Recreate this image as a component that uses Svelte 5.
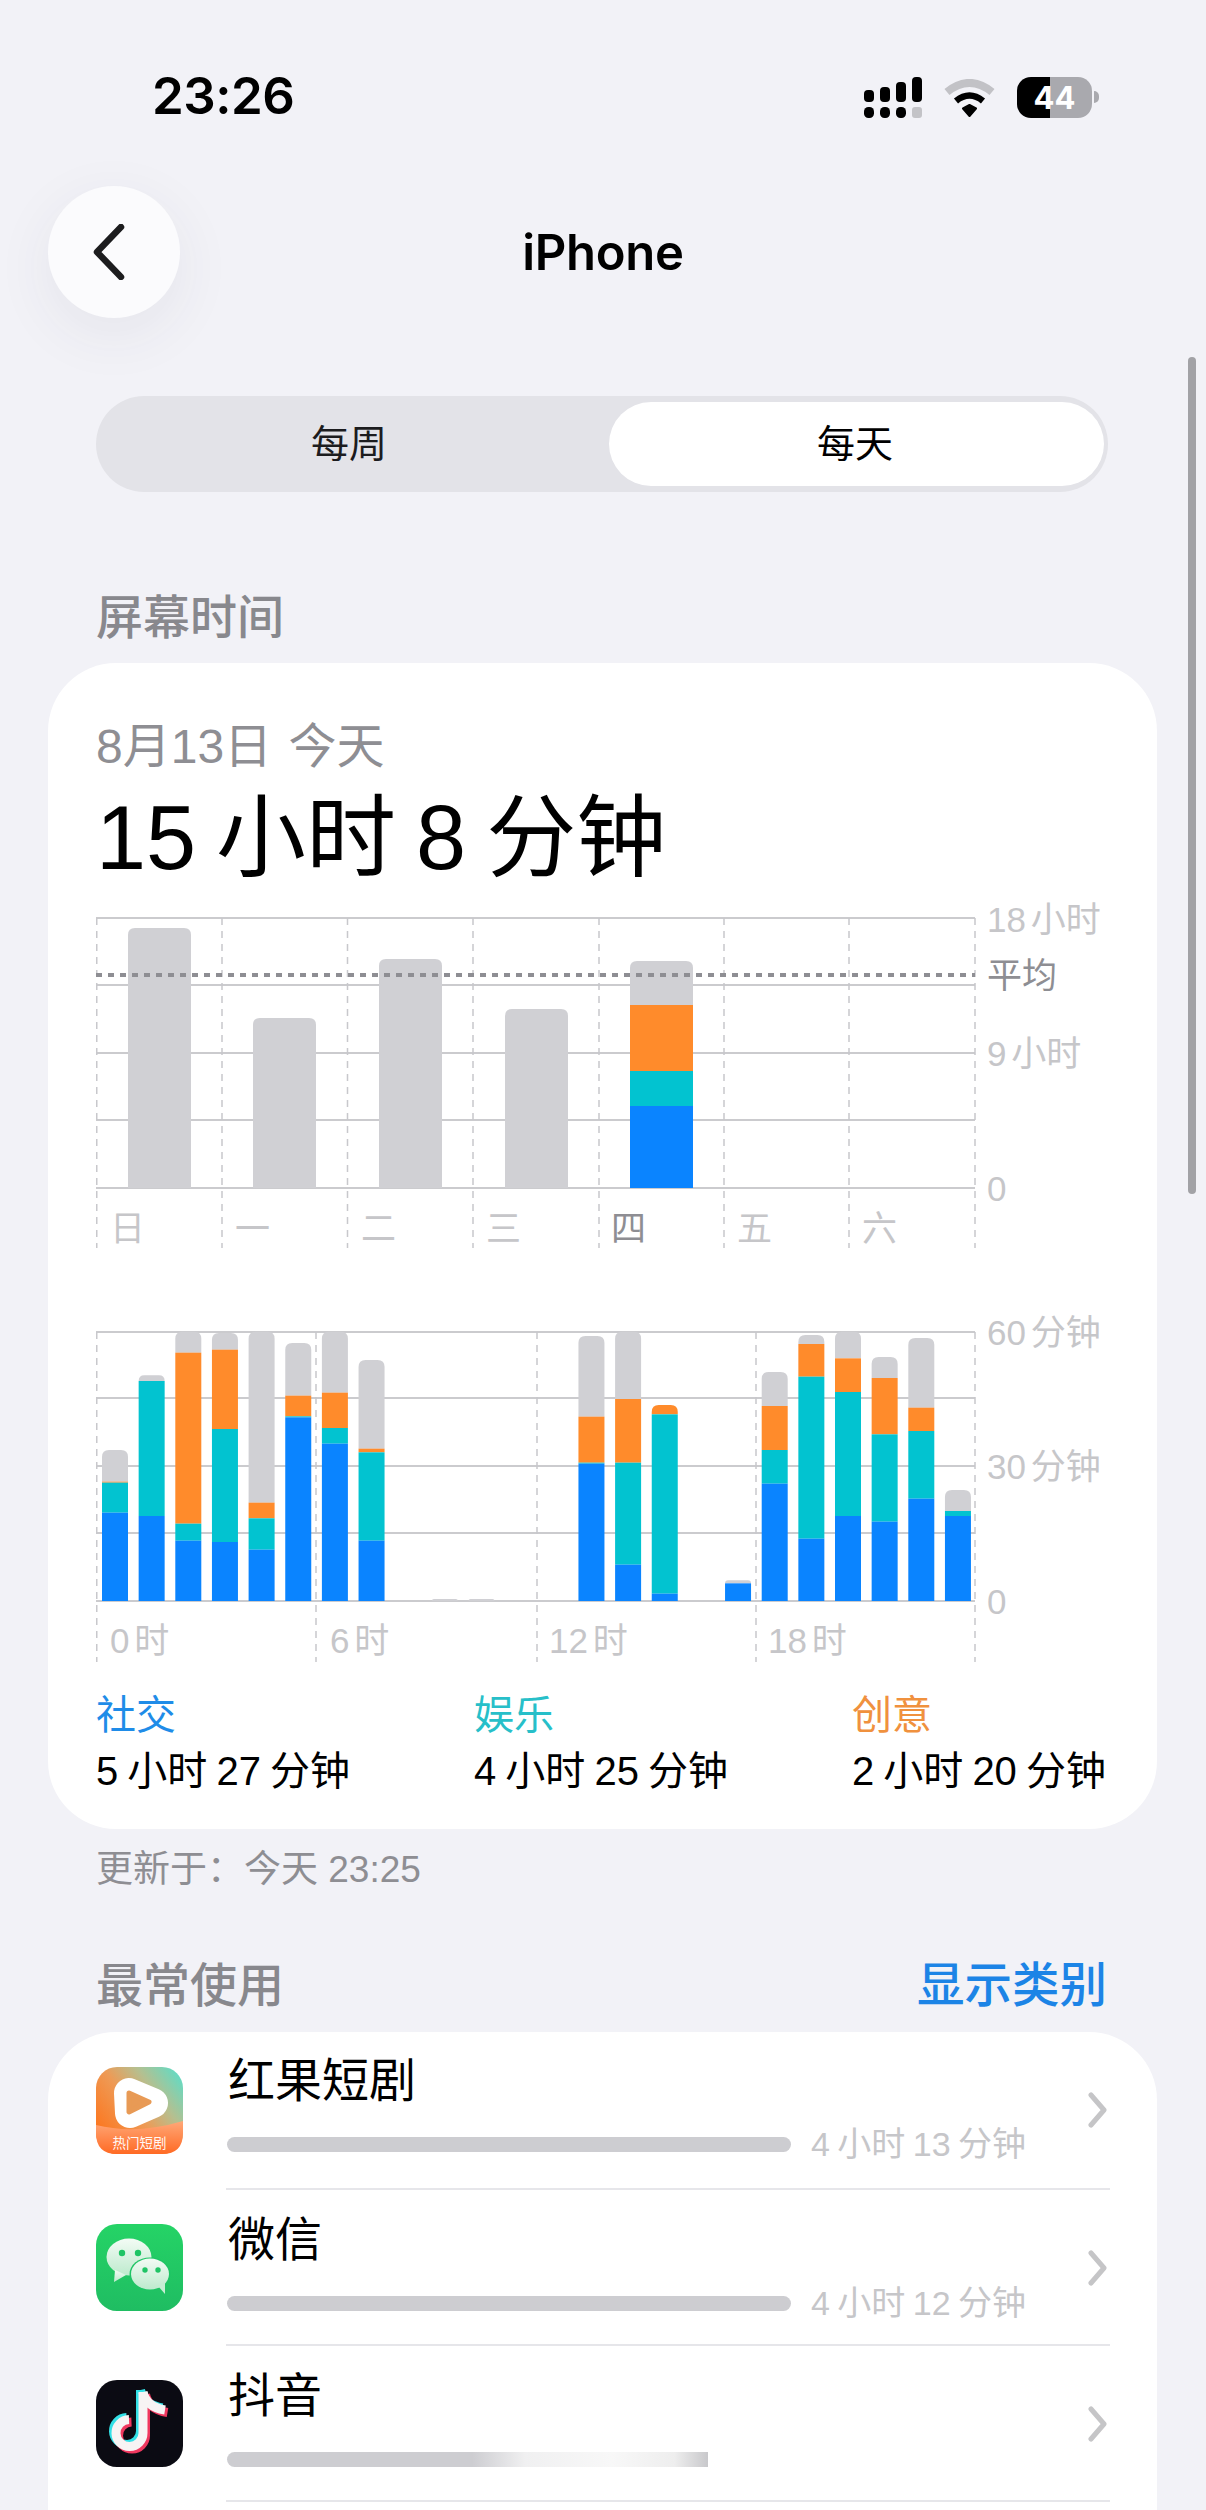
<script>
  const BLUE = '#0a84ff', TEAL = '#02c3d0', ORANGE = '#ff8b2b', GRAY = '#d0d0d4';
  const topPath = (x, y, w, h, r) => {
    const q = Math.min(r, h);
    return `M${x} ${y + h}V${y + q}Q${x} ${y} ${x + q} ${y}H${x + w - q}Q${x + w} ${y} ${x + w} ${y + q}V${y + h}Z`;
  };

  // chart 1 (svg origin 96,900)
  const vDays = [0.75, 126, 251.5, 377, 503, 628, 753, 879];
  const hDays = [18, 85, 153, 220, 288];
  const dayBars = [
    { x: 32, top: 28 }, { x: 157, top: 118 }, { x: 283, top: 59 }, { x: 409, top: 109 }
  ];
  const today = [
    { c: ORANGE, y: 105, h: 66 }, { c: TEAL, y: 171, h: 35 }, { c: BLUE, y: 206, h: 82 }
  ];
  const dayLabels = [
    { t: '日', x: 14 }, { t: '一', x: 139 }, { t: '二', x: 265 }, { t: '三', x: 390 },
    { t: '四', x: 515, on: true }, { t: '五', x: 641 }, { t: '六', x: 766 }
  ];

  // chart 2 (svg origin 96,1310): hour, then the tops of gray/orange/teal/blue read from the reference
  const hours = [
    [0, 450, 545, 548, 638], [1, 226, null, 243, 648], [2, 95, 158, 671, 722], [3, 99, 149, 387, 726],
    [4, 95, 608, 655, 749], [5, 129, 287, 349, 352], [6, 95, 278, 384, 431], [7, 180, 446, 457, 722],
    [9, 897, null, null, null], [10, 897, null, null, null],
    [13, 108, 350, 488, 491], [14, 95, 297, 488, 794], [15, null, 315, 343, 881],
    [17, 841, null, null, 850],
    [18, 216, 318, 450, 551], [19, 105, 132, 230, 716], [20, 95, 175, 276, 648], [21, 171, 234, 403, 665],
    [22, 114, 323, 393, 596], [23, 570, null, 633, 648]
  ];
  const cols = [GRAY, ORANGE, TEAL, BLUE];
  const BASE = 903;
  const toY = (z) => z / 3 - 10;
  const hourBars = hours.map(([i, ...tops]) => {
    const x = 6 + i * 36.65;
    const segs = [];
    tops.forEach((t, k) => {
      if (t === null) return;
      let end = BASE;
      for (let n = k + 1; n < 4; n++) if (tops[n] !== null) { end = tops[n]; break; }
      segs.push({ c: cols[k], y: toY(t), h: (end - t) / 3 });
    });
    return { x, first: segs[0], rest: segs.slice(1) };
  });
  const vHours = [0.75, 220, 441, 660, 879];
  const hHours = [22, 88, 156, 223, 291];
  const hourLabels = [
    { t: '0 时', x: 14 }, { t: '6 时', x: 234 }, { t: '12 时', x: 453 }, { t: '18 时', x: 672 }
  ];

  const legend = [
    { k: '社交', v: '5 小时 27 分钟', c: 'social' },
    { k: '娱乐', v: '4 小时 25 分钟', c: 'fun' },
    { k: '创意', v: '2 小时 20 分钟', c: 'make' }
  ];
</script>

<div class="page">
  <div class="scrollbar"></div>

  <header class="status">
    <span class="clock">23:26</span>
    <div class="status-icons">
      <svg class="signal" width="58" height="41" viewBox="0 0 58 41" aria-hidden="true">
        <rect x="0" y="13" width="10" height="12" rx="4" />
        <rect x="16" y="10" width="10" height="15" rx="4" />
        <rect x="32" y="5" width="10" height="20" rx="4" />
        <rect x="48" y="0" width="10" height="25" rx="4" />
        <rect x="0" y="30" width="10" height="11" rx="4.5" />
        <rect x="16" y="30" width="10" height="11" rx="4.5" />
        <rect x="32" y="30" width="10" height="11" rx="4.5" />
        <rect class="off" x="48" y="30" width="10" height="11" rx="3" />
      </svg>
      <svg class="wifi" width="51" height="38" viewBox="0 0 51 38" aria-hidden="true">
        <path class="wifi-off" d="M3 13Q25.500 -5 48 13" />
        <path class="wifi-on" d="M12 22Q25.500 11 39 22" />
        <path class="wifi-dot" d="M19 29.500L25.500 26L32 29.500L25.500 37Z" />
      </svg>
      <div class="battery"><span>44</span></div>
    </div>
  </header>

  <nav class="nav">
    <button class="back" aria-label="返回">
      <svg width="34" height="56" viewBox="0 0 34 56" aria-hidden="true">
        <path d="M29 3L5 28L29 53" />
      </svg>
    </button>
    <h1>iPhone</h1>
    <span></span>
  </nav>

  <div class="segment">
    <div class="seg-item">每周</div>
    <div class="seg-item active">每天</div>
  </div>

  <h2 class="section first">屏幕时间</h2>

  <section class="card usage">
    <div class="date">8月13日 今天</div>
    <div class="total">15 小时 8 分钟</div>

    <svg class="chart one" width="1010" height="350" viewBox="0 0 1010 350">
      {#each hDays as y}
        <line class="h" x1="0" x2="879" y1={y} y2={y} />
      {/each}
      {#each vDays as x}
        <line class="v" x1={x} x2={x} y1="18" y2="348" />
      {/each}
      {#each dayBars as b}
        <path d={topPath(b.x, b.top, 63, 288 - b.top, 7)} fill={GRAY} />
      {/each}
      <path d={topPath(534, 61, 63, 44, 7)} fill={GRAY} />
      {#each today as s}
        <rect x="534" y={s.y} width="63" height={s.h} fill={s.c} />
      {/each}
      <line class="avg" x1="0" x2="879" y1="75" y2="75" />
      <text class="axis" x="891" y="19">18 小时</text>
      <text class="axis strong" x="891" y="75">平均</text>
      <text class="axis" x="891" y="153">9 小时</text>
      <text class="axis" x="891" y="288">0</text>
      {#each dayLabels as d}
        <text class="axis" class:strong={d.on} x={d.x} y="328">{d.t}</text>
      {/each}
    </svg>

    <svg class="chart two" width="1010" height="355" viewBox="0 0 1010 355">
      {#each hHours as y}
        <line class="h" x1="0" x2="879" y1={y} y2={y} />
      {/each}
      {#each vHours as x}
        <line class="v" x1={x} x2={x} y1="22" y2="352" />
      {/each}
      {#each hourBars as b}
        <path d={topPath(b.x, b.first.y, 26, b.first.h, 7)} fill={b.first.c} />
        {#each b.rest as s}
          <rect x={b.x} y={s.y} width="26" height={s.h} fill={s.c} />
        {/each}
      {/each}
      <text class="axis" x="891" y="22">60 分钟</text>
      <text class="axis" x="891" y="156">30 分钟</text>
      <text class="axis" x="891" y="291">0</text>
      {#each hourLabels as h}
        <text class="axis" x={h.x} y="330">{h.t}</text>
      {/each}
    </svg>

    <div class="legend">
      {#each legend as l}
        <div class="legend-item">
          <div class="legend-key {l.c}">{l.k}</div>
          <div class="legend-val">{l.v}</div>
        </div>
      {/each}
    </div>
  </section>

  <p class="updated">更新于：今天 23:25</p>

  <div class="section-row">
    <h2 class="section">最常使用</h2>
    <span class="link">显示类别</span>
  </div>

  <section class="card apps">
    <div class="row">
      <svg class="app-icon" width="87" height="87" viewBox="0 0 87 87" aria-hidden="true">
        <defs>
          <linearGradient id="hg" x1="0" y1="0.85" x2="1" y2="0.1">
            <stop offset="0" stop-color="#ff6f14" />
            <stop offset="0.45" stop-color="#ee9a55" />
            <stop offset="0.7" stop-color="#b6bf8f" />
            <stop offset="1" stop-color="#5fdcc6" />
          </linearGradient>
          <linearGradient id="hb" x1="0" y1="0" x2="0" y2="1">
            <stop offset="0" stop-color="#ffa878" />
            <stop offset="1" stop-color="#ff6a24" />
          </linearGradient>
        </defs>
        <rect width="87" height="87" rx="21" fill="url(#hg)" />
        <path d="M0 58Q40 68 87 54V66Q87 87 66 87H21Q0 87 0 66Z" fill="url(#hb)" />
        <path class="blob" d="M33 26L57 36L34 46Z" />
        <path class="blob-in" d="M33 26L53 35L33 45Z" />
        <text class="hot" x="43.500" y="81">热门短剧</text>
      </svg>
      <div class="body">
        <div class="name">红果短剧</div>
        <div class="meter"><div class="bar"></div><span class="time">4 小时 13 分钟</span></div>
        <svg class="chev" width="19" height="36" viewBox="0 0 19 36" aria-hidden="true"><path d="M3 3L16 18L3 33" /></svg>
      </div>
    </div>

    <div class="row">
      <svg class="app-icon" width="87" height="87" viewBox="0 0 87 87" aria-hidden="true">
        <defs>
          <linearGradient id="wg" x1="0" y1="0" x2="0" y2="1">
            <stop offset="0" stop-color="#25d366" />
            <stop offset="1" stop-color="#1fbd62" />
          </linearGradient>
          <linearGradient id="wb" x1="0" y1="0" x2="0" y2="1">
            <stop offset="0" stop-color="#f3fbf5" />
            <stop offset="1" stop-color="#bdeacd" />
          </linearGradient>
        </defs>
        <rect width="87" height="87" rx="21" fill="url(#wg)" />
        <ellipse cx="33" cy="33" rx="22.500" ry="18.500" fill="url(#wb)" />
        <path d="M19 46L18 58L30 51Z" fill="url(#wb)" />
        <circle cx="26" cy="29" r="3.200" fill="#1fc465" />
        <circle cx="42" cy="29" r="3.200" fill="#1fc465" />
        <ellipse cx="54" cy="50" rx="20.500" ry="16.500" fill="#1fc465" />
        <ellipse cx="54" cy="50" rx="19" ry="15.500" fill="url(#wb)" />
        <path d="M62 62L69 70L69 58Z" fill="#c6edd4" />
        <circle cx="49" cy="46" r="2.700" fill="#1fc465" />
        <circle cx="62" cy="46" r="2.700" fill="#1fc465" />
      </svg>
      <div class="body">
        <div class="name">微信</div>
        <div class="meter"><div class="bar"></div><span class="time">4 小时 12 分钟</span></div>
        <svg class="chev" width="19" height="36" viewBox="0 0 19 36" aria-hidden="true"><path d="M3 3L16 18L3 33" /></svg>
      </div>
    </div>

    <div class="row">
      <svg class="app-icon" width="87" height="87" viewBox="0 0 87 87" aria-hidden="true">
        <rect width="87" height="87" rx="21" fill="#0b0b13" />
        <g fill="none" stroke-width="9">
          <g stroke="#33e0e6" transform="translate(-2.500 -2)">
            <path d="M47 12V53A13.500 13.500 0 1 1 33 39.500" />
            <path d="M47 12C49 22 57 28 69 30" />
          </g>
          <g stroke="#f0385f" transform="translate(2.500 2.500)">
            <path d="M47 12V53A13.500 13.500 0 1 1 33 39.500" />
            <path d="M47 12C49 22 57 28 69 30" />
          </g>
          <g stroke="#f7f4f4">
            <path d="M47 12V53A13.500 13.500 0 1 1 33 39.500" />
            <path d="M47 12C49 22 57 28 69 30" />
          </g>
        </g>
      </svg>
      <div class="body">
        <div class="name">抖音</div>
        <div class="meter"><div class="bar faded"></div></div>
        <svg class="chev" width="19" height="36" viewBox="0 0 19 36" aria-hidden="true"><path d="M3 3L16 18L3 33" /></svg>
      </div>
    </div>
  </section>
</div>

<style>
  :global(body) { margin: 0; background: #f2f2f7; }

  .page {
    position: relative;
    width: 1206px;
    height: 2510px;
    overflow: hidden;
    background: #f2f2f7;
    font-family: "Liberation Sans", "Noto Sans CJK SC", sans-serif;
    color: #000;
  }

  .scrollbar {
    position: absolute;
    left: 1188px;
    top: 357px;
    width: 8px;
    height: 837px;
    border-radius: 4px;
    background: #a2a2a6;
  }

  .status {
    height: 186px;
    box-sizing: border-box;
    padding: 70px 114px 0 152px;
    display: flex;
    justify-content: space-between;
    align-items: flex-start;
  }
  .clock {
    font-family: Inter, "Liberation Sans", sans-serif;
    font-weight: 600;
    font-size: 51px;
    line-height: 52px;
    letter-spacing: -0.5px;
  }
  .status-icons { display: flex; align-items: flex-start; padding-top: 7px; }
  .signal rect { fill: #000; }
  .signal .off { fill: #c3c3c7; }
  .wifi { margin-left: 22px; margin-top: 2px; }
  .wifi-off { fill: none; stroke: #c2c2c6; stroke-width: 8; }
  .wifi-on { fill: none; stroke: #000; stroke-width: 6.5; }
  .wifi-dot { fill: #000; stroke: #000; stroke-width: 2; stroke-linejoin: round; }
  .battery {
    position: relative;
    margin-left: 22px;
    width: 75px;
    height: 41px;
    border-radius: 14px;
    background: linear-gradient(90deg, #000 44%, #a9a9ae 44%);
    color: #fff;
    font-family: Inter, "Liberation Sans", sans-serif;
    font-weight: 700;
    font-size: 31px;
    line-height: 41px;
    text-align: center;
  }
  .battery::after {
    content: "";
    position: absolute;
    right: -7px;
    top: 14px;
    width: 5px;
    height: 12px;
    border-radius: 0 6px 6px 0;
    background: #a9a9ae;
  }

  .nav {
    margin: 0 48px;
    height: 132px;
    display: grid;
    grid-template-columns: 132px 1fr 132px;
    align-items: center;
  }
  .back {
    width: 132px;
    height: 132px;
    padding: 0 10px 0 0;
    border: 0;
    border-radius: 50%;
    background: #fbfbfd;
    box-shadow: 0 16px 60px rgba(60, 60, 80, 0.07);
    display: flex;
    align-items: center;
    justify-content: center;
  }
  .back path { fill: none; stroke: #1c1c1e; stroke-width: 6.5; stroke-linecap: round; stroke-linejoin: round; }
  .nav h1 {
    margin: 2px 0 0;
    text-align: center;
    font-family: Inter, "Liberation Sans", sans-serif;
    font-weight: 600;
    font-size: 49px;
    line-height: 60px;
    letter-spacing: -0.3px;
  }

  .segment {
    margin: 78px 98px 0 96px;
    height: 96px;
    box-sizing: border-box;
    padding: 6px 4px 6px 0;
    border-radius: 48px;
    background: #e3e3e8;
    display: grid;
    grid-template-columns: 513px 1fr;
    font-size: 38px;
    line-height: 84px;
    text-align: center;
  }
  .seg-item { padding-right: 7px; color: #1c1c1e; }
  .seg-item.active {
    padding-right: 3px;
    border-radius: 42px;
    background: #fff;
    color: #000;
  }

  .section {
    margin: 0;
    font-size: 47px;
    line-height: 60px;
    font-weight: 500;
    color: #88888d;
  }
  .section.first { margin: 96px 96px 15px; }

  .card { margin: 0 49px 0 48px; background: #fff; }
  .usage {
    height: 1166px;
    box-sizing: border-box;
    padding: 56px 48px 33px;
    border-radius: 68px;
  }
  .date { font-size: 48px; line-height: 56px; color: #8e8e93; word-spacing: 3px; }
  .total { margin-top: 13px; font-size: 90px; line-height: 100px; word-spacing: -5px; }

  .chart { display: block; }
  .chart.one { margin-top: 12px; }
  .chart.two { margin-top: 60px; }
  .chart .h { stroke: #cbcbce; stroke-width: 2; }
  .chart .v { stroke: #c8c8cc; stroke-width: 1.5; stroke-dasharray: 7 6; }
  .chart .avg { stroke: #8e8e93; stroke-width: 4; stroke-dasharray: 6 6; }
  .axis {
    font-family: "Liberation Sans", "Noto Sans CJK SC", sans-serif;
    font-size: 35px;
    word-spacing: -5px;
    fill: #c6c6c9;
    dominant-baseline: central;
  }
  .axis.strong { fill: #8e8e93; }

  .legend { margin-top: 25px; padding-right: 3px; display: flex; justify-content: space-between; }
  .legend-key { font-size: 40px; line-height: 50px; }
  .legend-key.social { color: #1f8ce8; }
  .legend-key.fun { color: #27bfc9; }
  .legend-key.make { color: #f0913e; }
  .legend-val { margin-top: 6px; font-size: 40px; line-height: 50px; word-spacing: -2px; }

  .updated {
    margin: 19px 96px 0;
    font-size: 37px;
    line-height: 44px;
    color: #8e8e93;
  }

  .section-row {
    margin: 64px 99px 16px 96px;
    display: flex;
    justify-content: space-between;
    align-items: center;
  }
  .link { font-size: 47.5px; line-height: 60px; font-weight: 500; color: #1c84e6; }

  .apps {
    min-height: 600px;
    padding-top: 2px;
    border-radius: 68px 68px 0 0;
  }
  .row { display: flex; height: 156px; }
  .app-icon { flex: none; margin: 34px 45px 0 48px; }
  .row:first-child .app-icon { margin-top: 33px; }
  .hot { fill: #fff; opacity: 0.95; font-size: 13.5px; text-anchor: middle; }
  .blob { fill: #fff; stroke: #fff; stroke-width: 30; stroke-linejoin: round; }
  .blob-in { fill: #e89a55; stroke: #e89a55; stroke-width: 5; stroke-linejoin: round; }

  .body {
    flex: 1;
    margin-right: 47px;
    margin-left: -2px;
    box-sizing: border-box;
    border-bottom: 2px solid #e6e6ea;
    display: grid;
    grid-template-columns: 1fr 19px;
    grid-template-rows: auto auto;
    align-content: start;
    padding-right: 3px;
  }
  .name {
    grid-column: 1;
    margin: 17px 0 0 2px;
    font-size: 47px;
    line-height: 60px;
  }
  .row + .row .name { margin-top: 20px; }
  .meter {
    grid-column: 1;
    margin-top: 11px;
    margin-left: 1px;
    height: 44px;
    display: flex;
    align-items: center;
  }
  .chev {
    grid-column: 2;
    grid-row: 1 / 3;
    align-self: start;
    margin-top: 60px;
  }
  .row:first-child .chev { margin-top: 58px; }
  .chev path { fill: none; stroke: #c5c5c7; stroke-width: 5; stroke-linecap: round; stroke-linejoin: round; }
  .bar {
    flex: none;
    width: 564px;
    height: 15px;
    border-radius: 8px;
    background: #cdcdd1;
  }
  .bar.faded {
    width: 481px;
    border-radius: 8px 0 0 8px;
    background: linear-gradient(90deg, #cdcdd1 0 51%, #f0f0f1 62%, #f8f8f8 80%, #eeeeee 93%, #c8c8cb 100%);
  }
  .time {
    margin-left: 20px;
    font-size: 34px;
    line-height: 44px;
    color: #c6c6c9;
    word-spacing: -2px;
    white-space: nowrap;
  }
</style>
